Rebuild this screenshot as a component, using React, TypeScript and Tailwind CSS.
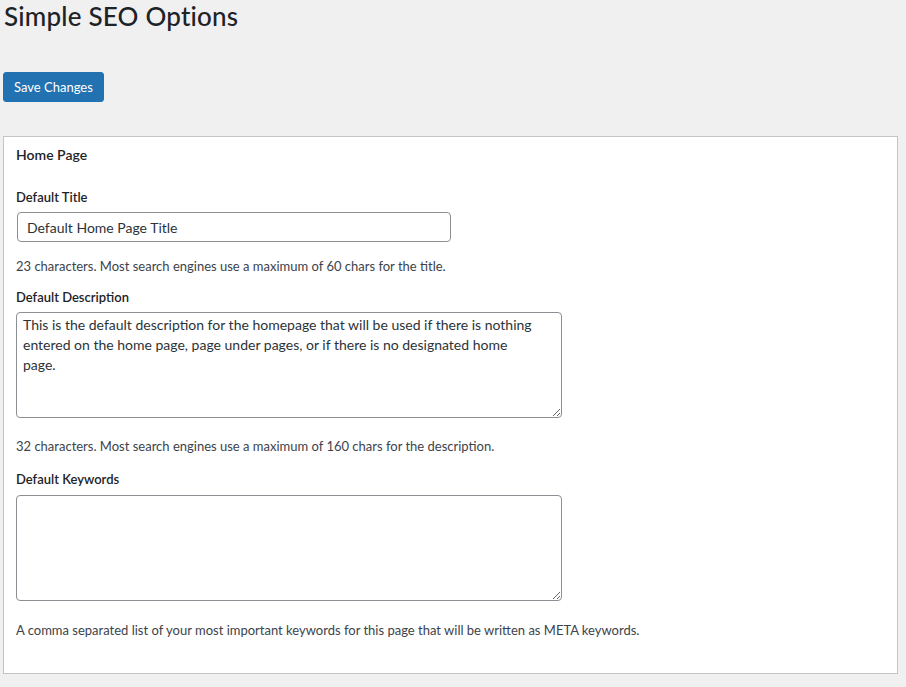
import { useState } from "react";

// ── Helpers ────────────────────────────────────────────────────────────────
function Field({
  label,
  children,
  help,
  top,
  gap,
  helpGap,
}: {
  label: string;
  children: React.ReactNode;
  help: string;
  top: string;
  gap: string;
  helpGap: string;
}) {
  return (
    <div className={top}>
      <label className="block text-[13px] font-semibold text-[#1d2327] leading-[18px]">{label}</label>
      <div className={gap}>{children}</div>
      <p className={`${helpGap} text-[13px] leading-[18px] text-[#3c434a]`}>{help}</p>
    </div>
  );
}

const DESC =
  "This is the default description for the homepage that will be used if there is nothing entered on the home page, page under pages, or if there is no designated home\npage.";

export default function App() {
  const [title, setTitle] = useState("Default Home Page Title");
  const [desc, setDesc] = useState(DESC);
  const [keywords, setKeywords] = useState("");

  return (
    <div className="min-h-screen bg-[#f0f0f1] font-['Lato',sans-serif] text-[#3c434a]">
      <div className="pl-[3px] pr-[8px]">
        {/* ── Header ── */}
        <h1 className="pl-[1px] text-[26px] font-medium leading-[32px] tracking-[0.2px] text-[#1d2327]">
          Simple SEO Options
        </h1>

        <button className="mt-[40px] h-[30px] px-[10px] pt-[1px] rounded-[3px] bg-[#2271b1] border border-[#2271b1] text-white text-[13px]">
          Save Changes
        </button>

        {/* ── Panel ── */}
        <div className="mt-[34px] h-[538px] bg-white border border-[#c3c4c7] px-[12px] pt-[8px]">
          <h2 className="text-[14px] font-semibold leading-[20px] text-[#1d2327]">Home Page</h2>

          <Field
            label="Default Title"
            help="23 characters. Most search engines use a maximum of 60 chars for the title."
            top="mt-[23px]"
            gap="mt-[6px]"
            helpGap="mt-[15px]"
          >
            <input
              value={title}
              onChange={(e) => setTitle(e.target.value)}
              className="block ml-[1px] w-[434px] h-[30px] px-[9px] rounded-[4px] border border-[#8c8f94] text-[14px] text-[#2c3338] outline-none"
            />
          </Field>

          <Field
            label="Default Description"
            help="32 characters. Most search engines use a maximum of 160 chars for the description."
            top="mt-[13px]"
            gap="mt-[6px]"
            helpGap="mt-[19px]"
          >
            <textarea
              value={desc}
              onChange={(e) => setDesc(e.target.value)}
              className="block w-[546px] h-[106px] px-[6px] py-[2px] rounded-[4px] border border-[#8c8f94] text-[14px] leading-[20px] text-[#2c3338] outline-none"
            />
          </Field>

          <Field
            label="Default Keywords"
            help="A comma separated list of your most important keywords for this page that will be written as META keywords."
            top="mt-[15px]"
            gap="mt-[7px]"
            helpGap="mt-[20px]"
          >
            <textarea
              value={keywords}
              onChange={(e) => setKeywords(e.target.value)}
              className="block w-[546px] h-[106px] px-[6px] py-[2px] rounded-[4px] border border-[#8c8f94] text-[14px] leading-[20px] text-[#2c3338] outline-none"
            />
          </Field>
        </div>
      </div>
    </div>
  );
}
